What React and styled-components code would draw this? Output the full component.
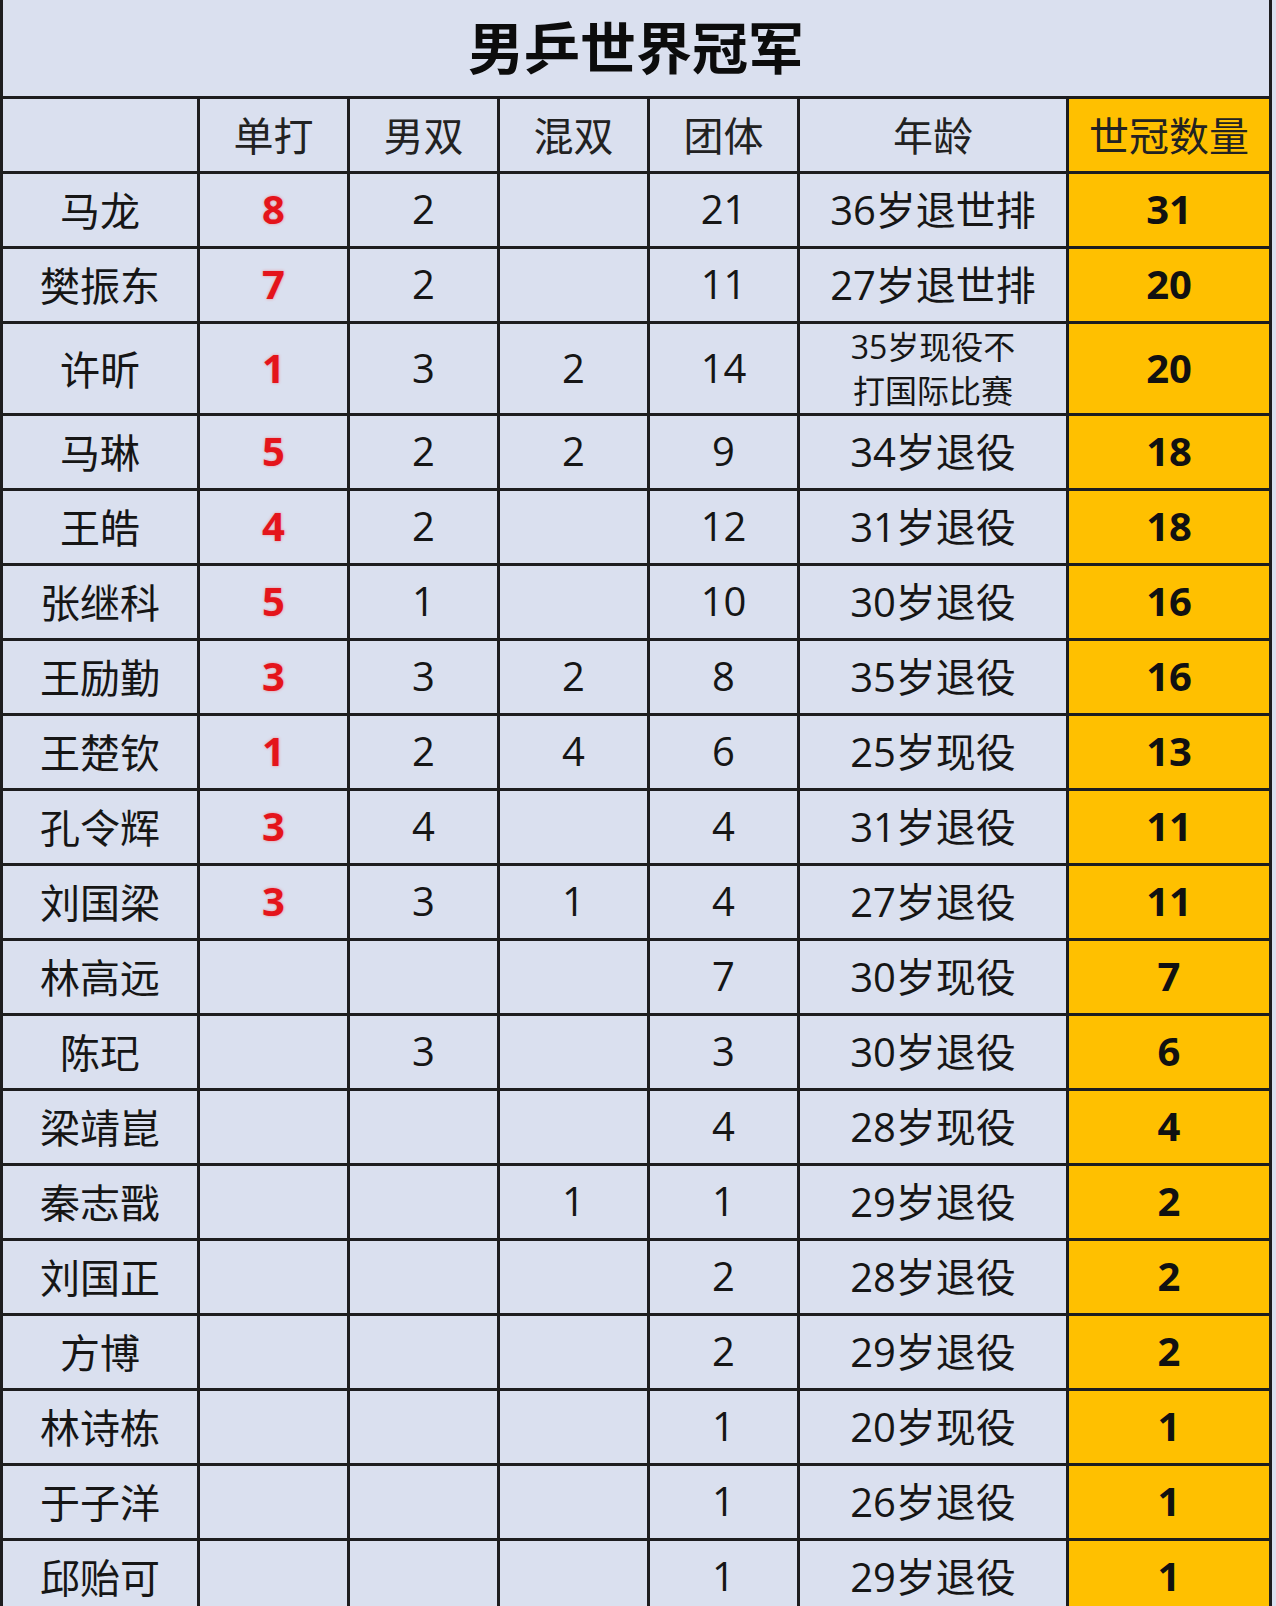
import React from "react";
import styled, { createGlobalStyle } from "styled-components";

const GlobalStyle = createGlobalStyle`
  html, body {
    margin: 0;
    padding: 0;
    background: #dae0ef;
  }
  body {
    font-family: "Open Sans", "Noto Sans CJK SC", sans-serif;
    color: #141414;
  }
  * { box-sizing: border-box; }
`;

const LINE = "3px solid #1d1d1f";
const COLS = "197px 150px 150px 150px 150px 269px 203px";

const Sheet = styled.div`
  width: 1272px;
  border-left: ${LINE};
  background: #dae0ef;
  display: flex;
  flex-direction: column;
`;

const TitleBar = styled.div`
  height: 99px;
  border-right: ${LINE};
  border-bottom: ${LINE};
  display: flex;
  align-items: center;
  justify-content: center;
  padding-bottom: 6px;
  font-family: "Noto Sans CJK SC", sans-serif;
  font-weight: 700;
  font-size: 56px;
  line-height: 1;
  color: #0c0c0c;
`;

const Row = styled.div`
  display: grid;
  grid-template-columns: ${COLS};
  grid-template-rows: minmax(0, 1fr);
  height: ${(p) => (p.$tall ? 92 : 75)}px;
`;

const Cell = styled.div`
  border-right: ${LINE};
  border-bottom: ${LINE};
  display: flex;
  align-items: center;
  justify-content: center;
  text-align: center;
  line-height: 1;
  padding-bottom: 2px;
  font-size: 40px;
  font-family: "Open Sans", "Noto Sans CJK SC", sans-serif;
  color: #161616;
  background: ${(p) => (p.$gold ? "#ffc000" : "transparent")};
  white-space: nowrap;
  overflow: hidden;
`;

const HeaderCell = styled(Cell)`
  font-family: "Noto Sans CJK SC", sans-serif;
  font-weight: 400;
  color: #222;
`;

const NameCell = styled(Cell)`
  font-family: "Noto Sans CJK SC", sans-serif;
  font-weight: 400;
`;

const NumCell = styled(Cell)`
  font-weight: ${(p) => (p.$red ? 700 : 400)};
  color: ${(p) => (p.$red ? "#e4141b" : "#161616")};
  text-shadow: ${(p) => (p.$red ? "0 0 3px rgba(255, 40, 40, 0.45)" : "none")};
`;

const AgeCell = styled(Cell)`
  font-size: ${(p) => (p.$small ? 32 : 40)}px;
  line-height: ${(p) => (p.$small ? "44px" : 1)};
  padding-bottom: 0;
  white-space: normal;
`;

const AgeText = styled.span`
  display: block;
`;

const TotalCell = styled(Cell)`
  font-weight: 700;
  color: #111;
`;

const headers = ["", "单打", "男双", "混双", "团体", "年龄"];

const data = [
  ["马龙", "8", "2", "", "21", ["36岁退世排"], "31"],
  ["樊振东", "7", "2", "", "11", ["27岁退世排"], "20"],
  ["许昕", "1", "3", "2", "14", ["35岁现役不", "打国际比赛"], "20"],
  ["马琳", "5", "2", "2", "9", ["34岁退役"], "18"],
  ["王皓", "4", "2", "", "12", ["31岁退役"], "18"],
  ["张继科", "5", "1", "", "10", ["30岁退役"], "16"],
  ["王励勤", "3", "3", "2", "8", ["35岁退役"], "16"],
  ["王楚钦", "1", "2", "4", "6", ["25岁现役"], "13"],
  ["孔令辉", "3", "4", "", "4", ["31岁退役"], "11"],
  ["刘国梁", "3", "3", "1", "4", ["27岁退役"], "11"],
  ["林高远", "", "", "", "7", ["30岁现役"], "7"],
  ["陈玘", "", "3", "", "3", ["30岁退役"], "6"],
  ["梁靖崑", "", "", "", "4", ["28岁现役"], "4"],
  ["秦志戬", "", "", "1", "1", ["29岁退役"], "2"],
  ["刘国正", "", "", "", "2", ["28岁退役"], "2"],
  ["方博", "", "", "", "2", ["29岁退役"], "2"],
  ["林诗栋", "", "", "", "1", ["20岁现役"], "1"],
  ["于子洋", "", "", "", "1", ["26岁退役"], "1"],
  ["邱贻可", "", "", "", "1", ["29岁退役"], "1"],
];

export default function App() {
  return (
    <>
      <GlobalStyle />
      <Sheet>
        <TitleBar>男乒世界冠军</TitleBar>
        <Row>
          {headers.map((h, i) => (
            <HeaderCell key={i}>{h}</HeaderCell>
          ))}
          <HeaderCell $gold>世冠数量</HeaderCell>
        </Row>
        {data.map(([name, single, md, xd, team, age, total]) => (
          <Row key={name} $tall={age.length > 1}>
            <NameCell>{name}</NameCell>
            <NumCell $red>{single}</NumCell>
            <NumCell>{md}</NumCell>
            <NumCell>{xd}</NumCell>
            <NumCell>{team}</NumCell>
            <AgeCell $small={age.length > 1}>
              <div>
                {age.map((line) => (
                  <AgeText key={line}>{line}</AgeText>
                ))}
              </div>
            </AgeCell>
            <TotalCell $gold>{total}</TotalCell>
          </Row>
        ))}
      </Sheet>
    </>
  );
}
